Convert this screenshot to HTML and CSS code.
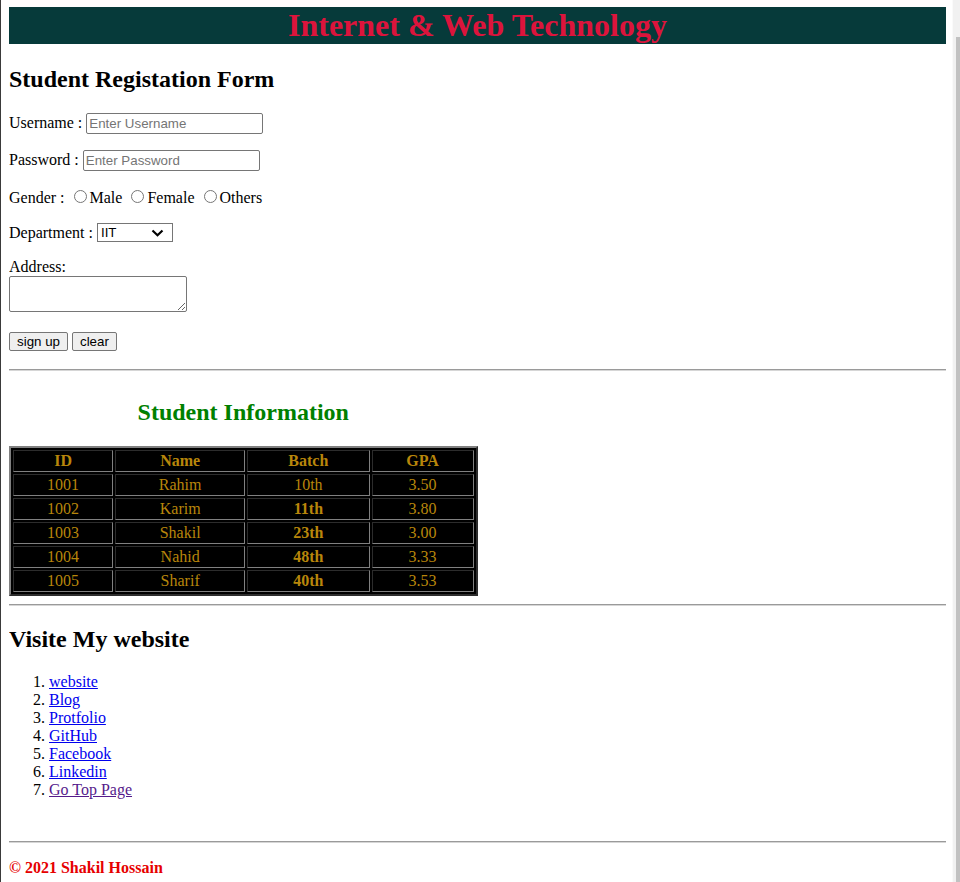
FILE: index.html
```html
<!DOCTYPE html>
<html lang="en">
<head>
<meta charset="utf-8">
<title>Internet &amp; Web Technology</title>
<link rel="stylesheet" href="styles.css">
</head>
<body>
<header class="banner">
  <h1 class="banner-title">Internet &amp; Web Technology</h1>
</header>

<h2 class="section-title first">Student Registation Form</h2>
<form class="reg-form">
  <p class="row">Username : <input class="text-input" type="text" placeholder="Enter Username"></p>
  <p class="row">Password : <input class="text-input" type="password" placeholder="Enter Password"></p>
  <p class="row">Gender : <input class="radio" type="radio" name="g">Male <input class="radio" type="radio" name="g">Female <input class="radio" type="radio" name="g">Others</p>
  <p class="row">Department : <select class="dept"><option>IIT</option><option>CSE</option><option>EEE</option></select></p>
  <p class="row">Address:<br><textarea class="address"></textarea></p>
  <p class="row last"><button class="btn" type="button">sign up</button> <button class="btn" type="reset">clear</button></p>
</form>
<hr class="rule">

<table class="info-table">
  <caption class="info-caption"><h2 class="caption-title">Student Information</h2></caption>
  <tr><th>ID</th><th>Name</th><th>Batch</th><th>GPA</th></tr>
  <tr><td>1001</td><td>Rahim</td><td>10th</td><td>3.50</td></tr>
  <tr><td>1002</td><td>Karim</td><td class="strong">11th</td><td>3.80</td></tr>
  <tr><td>1003</td><td>Shakil</td><td class="strong">23th</td><td>3.00</td></tr>
  <tr><td>1004</td><td>Nahid</td><td class="strong">48th</td><td>3.33</td></tr>
  <tr><td>1005</td><td>Sharif</td><td class="strong">40th</td><td>3.53</td></tr>
</table>
<hr class="rule">

<h2 class="section-title">Visite My website</h2>
<ol class="links">
  <li><a class="link" href="#">website</a></li>
  <li><a class="link" href="#">Blog</a></li>
  <li><a class="link" href="#">Protfolio</a></li>
  <li><a class="link" href="#">GitHub</a></li>
  <li><a class="link" href="#">Facebook</a></li>
  <li><a class="link" href="#">Linkedin</a></li>
  <li><a class="link visited" href="#">Go Top Page</a></li>
</ol>
<br>
<hr class="rule">
<p class="footer">© 2021 Shakil Hossain</p>

<div class="fake-scroll" aria-hidden="true"><div class="fake-thumb"></div></div>
</body>
</html>
```

FILE: styles.css
```css
html {
  border-left: 1px solid #3a3a3a;
  min-height: 100%;
  scrollbar-width: none;
}
html::-webkit-scrollbar { width: 0; height: 0; display: none; }

body {
  margin: 7px 14px 8px 8px;
  font-family: "Liberation Serif", "Times New Roman", serif;
  font-size: 16px;
  color: #000;
  background: #fff;
}

.banner {
  background: #063a3a;
}
.banner-title {
  margin: 0;
  text-align: center;
  color: #dc143c;
  font-size: 32px;
  font-weight: bold;
}

.section-title {
  font-size: 24px;
  font-weight: bold;
  margin: 20px 0;
}
.section-title.first { margin-top: 22px; }

.reg-form { margin: 0; }
.row { margin: 16px 0; }
.row.last { margin-bottom: 18px; }

.text-input {
  box-sizing: border-box;
  width: 177px;
  height: 21px;
  font-family: "Liberation Sans", Arial, sans-serif;
  font-size: 13.33px;
  padding: 1px 2px;
  border: 1px solid #767676;
  border-radius: 2px;
}
.text-input::placeholder { color: #757575; }

.radio { margin: 3px 3px 0 5px; }

.dept {
  -webkit-appearance: none;
  appearance: none;
  box-sizing: border-box;
  width: 76px;
  height: 19px;
  padding: 0 0 0 3px;
  font-family: "Liberation Sans", Arial, sans-serif;
  font-size: 13.33px;
  color: #000;
  border: 1px solid #767676;
  border-radius: 0;
  background-color: #fff;
  background-image: url("data:image/svg+xml;utf8,<svg xmlns='http://www.w3.org/2000/svg' width='13' height='8' viewBox='0 0 13 8'><path d='M1.5 1.5 L6.5 6.2 L11.5 1.5' fill='none' stroke='black' stroke-width='2.2'/></svg>");
  background-repeat: no-repeat;
  background-position: right 8px center;
  vertical-align: 1px;
}

.address {
  box-sizing: border-box;
  width: 178px;
  height: 36px;
  border: 1px solid #767676;
  border-radius: 2px;
}

.btn {
  font-family: "Liberation Sans", Arial, sans-serif;
  font-size: 13.33px;
  line-height: 15px;
  padding: 1px 7px;
  background: #efefef;
  border: 1px solid #767676;
  border-radius: 2px;
  color: #000;
}

.rule {
  margin: 8px 0;
  border-style: solid;
  border-width: 1px 0 1px 0;
  border-top-color: #9a9a9a;
  border-bottom-color: #d6d6d6;
  height: 0;
}

.info-table {
  width: 50%;
  background: #000;
  color: #b8860b;
  border: 2px outset #808080;
  border-spacing: 2px;
}
.info-caption { caption-side: top; }
.caption-title {
  color: #008000;
  font-size: 24px;
  font-weight: bold;
  margin: 20px 0;
}
.info-table th,
.info-table td {
  border: 1px inset #808080;
  padding: 1px;
  text-align: center;
}
.info-table th { font-weight: bold; }
.info-table .strong { font-weight: bold; }

.links {
  margin: 16px 0;
  padding-left: 40px;
}
.link { color: #0000ee; text-decoration: underline; }
.link.visited { color: #551a8b; }

.footer {
  margin: 16px 0;
  color: #e60000;
  font-weight: bold;
}

.fake-scroll {
  position: fixed;
  top: 0;
  right: 0;
  width: 7px;
  height: 100%;
  background: #f1f1f1;
  border-left: 1px solid #fafafa;
}
.fake-thumb {
  position: absolute;
  top: 37px;
  bottom: 0;
  right: 0;
  width: 4px;
  background: #c1c1c1;
}
```
